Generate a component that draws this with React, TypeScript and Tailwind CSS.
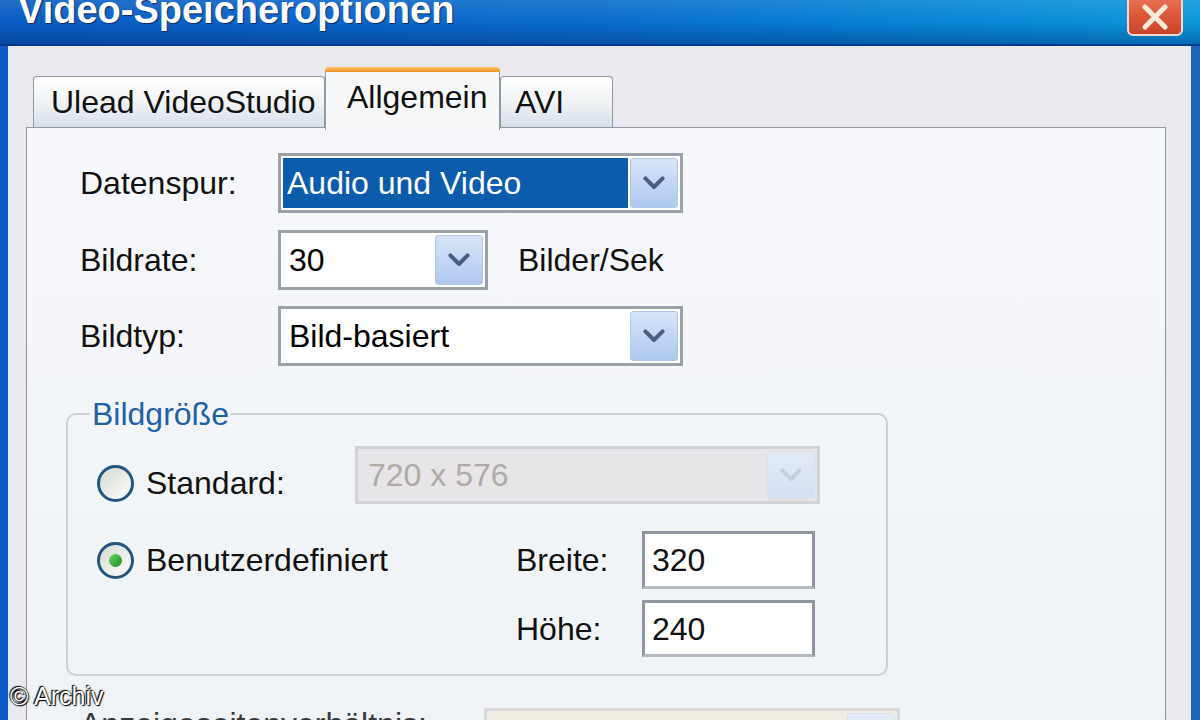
import React from 'react';

// Windows XP "Video-Speicheroptionen" dialog, scaled up

const Chevron = ({ faded }: { faded?: boolean }) => (
  <svg width="22" height="14" viewBox="0 0 11 7">
    <path
      d="M1.2 1.2l4.3 4.3 4.3-4.3"
      fill="none"
      stroke={faded ? '#c3d0e0' : '#4a5d84'}
      strokeWidth="2"
      strokeLinecap="round"
      strokeLinejoin="round"
    />
  </svg>
);

const DropButton = ({ faded }: { faded?: boolean }) => (
  <div
    className={`w-[48px] ml-[2px] rounded-[3px] border flex items-center justify-center ${
      faded
        ? 'border-[#d6e0ee] bg-gradient-to-b from-[#e2eaf6] to-[#d3e0f2]'
        : 'border-[#b4c8e8] bg-gradient-to-b from-[#d6e4f8] via-[#c3d6f4] to-[#afc8ee]'
    }`}
  >
    <Chevron faded={faded} />
  </div>
);

type ComboProps = {
  w: string;
  h?: string;
  value: string;
  selected?: boolean;
  disabled?: boolean;
};

const Combo = ({ w, h = 'h-[60px]', value, selected, disabled }: ComboProps) => (
  <div
    className={`${w} ${h} flex p-[2px] border-[3px] ${
      disabled ? 'border-[#d2d3d6] bg-[#e7e5e7]' : 'border-[#9aa1a9] bg-white'
    }`}
  >
    <div
      className={`flex-1 flex items-center ${
        selected
          ? 'bg-[#0b5cab] text-white pl-[4px]'
          : disabled
          ? 'text-[#aeaba6] pl-[8px]'
          : 'text-black pl-[6px]'
      }`}
    >
      {value}
    </div>
    <DropButton faded={disabled} />
  </div>
);

const Radio = ({ checked }: { checked?: boolean }) => (
  <div className="w-[37px] h-[37px] rounded-full border-[3px] border-[#24557e] bg-gradient-to-br from-[#d5d8d0] to-white flex items-center justify-center">
    {checked && (
      <div className="w-[13px] h-[13px] rounded-full bg-gradient-to-br from-[#62d862] to-[#1c8a1c]" />
    )}
  </div>
);

const TextBox = ({ value }: { value: string }) => (
  <div className="w-[173px] h-full border-[3px] border-[#8f969e] border-b-[#b5bac0] bg-white flex items-center pl-[7px]">
    {value}
  </div>
);

const FormRow = ({ label, children }: { label: string; children: React.ReactNode }) => (
  <div className="flex items-center pl-[14px]">
    <div className="w-[198px]">{label}</div>
    {children}
  </div>
);

export default function App() {
  return (
    <div className="relative w-[1200px] h-[720px] overflow-hidden flex flex-col font-['Liberation_Sans',Arial,sans-serif] text-[32px] leading-none text-[#111]">
      {/* title bar */}
      <div className="h-[46px] shrink-0 bg-gradient-to-r from-[#0a5cc2] via-[#0a6ccc] to-[#0b98dc]">
        <div className="h-full flex items-start justify-between bg-gradient-to-b from-white/10 via-transparent to-[#002a70]/40 border-b-2 border-[#003a8e]">
          <div className="-mt-[9px] pl-[18px] text-[38px] leading-[38px] font-bold text-white [text-shadow:1px_1px_1px_#0a2a6a]">
            Video-Speicheroptionen
          </div>
          <div className="-mt-[8px] mr-[17px] w-[56px] h-[44px] rounded-[6px] border-2 border-[#f2d8d0] bg-gradient-to-b from-[#ec7a5c] via-[#dc5a3c] to-[#c8442a] flex items-center justify-center pt-[6px]">
            <svg width="30" height="26" viewBox="0 0 30 26">
              <path d="M5 3l20 20M25 3L5 23" stroke="#f8eadb" strokeWidth="5" strokeLinecap="round" />
            </svg>
          </div>
        </div>
      </div>

      {/* window body */}
      <div className="flex-1 min-h-0 overflow-hidden flex flex-col pt-[21px] bg-[#eae9ef] border-l-[8px] border-l-[#0b5bc8] border-r-[9px] border-r-[#1b66b6]">
        {/* tabs */}
        <div className="ml-[18px] pl-[7px] h-[60px] shrink-0 flex items-end relative z-10">
          <div className="w-[292px] h-[51px] pl-[17px] flex items-center rounded-t-[4px] border border-b-0 border-[#919b9c] bg-gradient-to-b from-white via-[#f1f3f5] to-[#d6dfe9]">
            Ulead VideoStudio
          </div>
          <div className="w-[175px] h-[63px] -mb-[3px] flex flex-col">
            <div className="h-[5px] rounded-t-[4px] bg-gradient-to-b from-[#ffc65a] to-[#e8902e]" />
            <div className="flex-1 pl-[21px] pb-[8px] flex items-center border-x border-[#919b9c] bg-[#f7f8fa]">
              Allgemein
            </div>
          </div>
          <div className="w-[113px] h-[51px] pl-[14px] flex items-center rounded-t-[4px] border border-b-0 border-[#919b9c] bg-gradient-to-b from-white via-[#f1f3f5] to-[#d6dfe9]">
            AVI
          </div>
        </div>

        {/* tab page */}
        <div className="ml-[18px] mr-[25px] h-[640px] shrink-0 border border-[#919b9c] bg-gradient-to-b from-[#f6f7fa] to-[#eff3f6] pt-[25px] pl-[39px] flex flex-col">
          <FormRow label="Datenspur:">
            <Combo w="w-[405px]" value="Audio und Video" selected />
          </FormRow>
          <div className="mt-[17px]">
            <FormRow label="Bildrate:">
              <Combo w="w-[210px]" value="30" />
              <span className="ml-[30px]">Bilder/Sek</span>
            </FormRow>
          </div>
          <div className="mt-[16px]">
            <FormRow label="Bildtyp:">
              <Combo w="w-[405px]" value="Bild-basiert" />
            </FormRow>
          </div>

          <fieldset className="mt-[32px] w-[822px] border-2 border-[#ccd0d6] rounded-[10px] pb-[17px]">
            <legend className="ml-[22px] px-[2px] text-[#1d62a8] leading-[32px]">Bildgröße</legend>
            <div className="pl-[29px]">
              <div className="mt-[16px] h-[58px] flex items-center">
                <div className="w-[258px] mt-[16px] flex items-center gap-[12px]">
                  <Radio />
                  <span>Standard:</span>
                </div>
                <Combo w="w-[465px]" h="h-[58px]" value="720 x 576" disabled />
              </div>
              <div className="mt-[27px] h-[58px] flex items-center">
                <div className="w-[419px] flex items-center gap-[12px]">
                  <Radio checked />
                  <span>Benutzerdefiniert</span>
                </div>
                <div className="w-[126px]">Breite:</div>
                <TextBox value="320" />
              </div>
              <div className="mt-[11px] h-[57px] flex items-center">
                <div className="w-[419px]" />
                <div className="w-[126px]">Höhe:</div>
                <TextBox value="240" />
              </div>
            </div>
          </fieldset>

          <div className="mt-[32px] pl-[14px] flex items-start">
            <div className="w-[404px] text-[#3a3a3a]">Anzeigeseitenverhältnis:</div>
            <div className="w-[416px] h-[58px] flex p-[2px] border-[3px] border-[#d8d8da] bg-[#efece2]">
              <div className="flex-1" />
              <DropButton faded />
            </div>
          </div>
        </div>
      </div>

      {/* watermark */}
      <div className="absolute left-[10px] top-[684px] text-[25px] leading-none text-white font-['Liberation_Sans_Narrow','Liberation_Sans',sans-serif] [text-shadow:0_0_2px_#000,1px_1px_1px_#000,-1px_-1px_1px_#000]">
        © Archiv
      </div>
    </div>
  );
}
